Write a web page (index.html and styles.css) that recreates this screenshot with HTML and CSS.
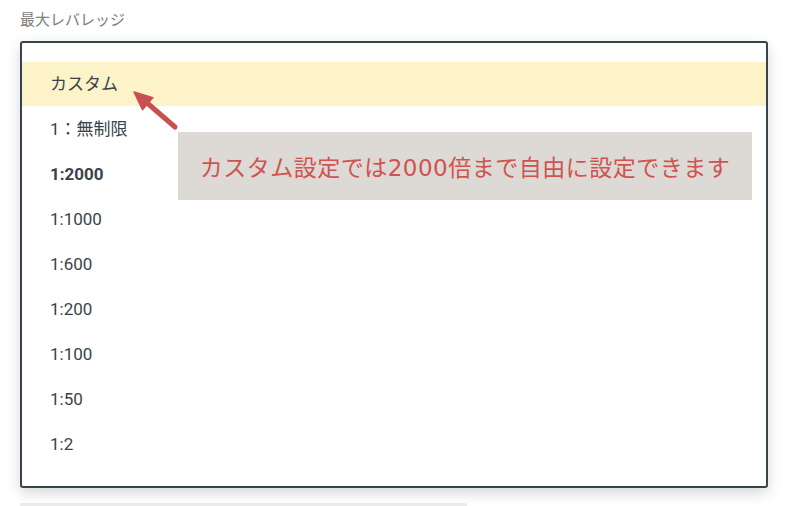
FILE: index.html
```html
<!DOCTYPE html>
<html lang="ja">
<head>
<meta charset="utf-8">
<link rel="stylesheet" href="styles.css">
</head>
<body>
<div class="page">
  <div class="label">最大レバレッジ</div>
  <div class="select">
    <ul class="options">
      <li class="opt selected">カスタム</li>
      <li class="opt">1：無制限</li>
      <li class="opt bold">1:2000</li>
      <li class="opt">1:1000</li>
      <li class="opt">1:600</li>
      <li class="opt">1:200</li>
      <li class="opt">1:100</li>
      <li class="opt">1:50</li>
      <li class="opt">1:2</li>
    </ul>
    <div class="callout">カスタム設定では2000倍まで自由に設定できます</div>
  </div>
  <div class="next-bar"></div>
  <svg class="arrow" width="80" height="60" viewBox="0 0 80 60">
    <line x1="36" y1="22" x2="65" y2="47" stroke="#c8504f" stroke-width="5" stroke-linecap="round"/>
    <polygon points="24,12 32.5,29.8 42.9,17.6" fill="#c8504f" stroke="#c8504f" stroke-width="1.5" stroke-linejoin="round"/>
  </svg>
</div>
</body>
</html>
```

FILE: styles.css
```css
html, body {
  margin: 0;
  padding: 0;
  background: #ffffff;
}
body {
  font-family: Roboto, "Noto Sans CJK JP", sans-serif;
  width: 788px;
  height: 506px;
  overflow: hidden;
}
.page {
  position: relative;
  padding: 10px 20px 0 20px;
}
.label {
  font-size: 15px;
  line-height: 21px;
  color: #808080;
  height: 21px;
  margin-bottom: 10px;
}
.select {
  position: relative;
  width: 744px;
  height: 443px;
  border: 2px solid #36444e;
  border-radius: 3px;
  background: #fff;
  box-shadow: 0 5px 14px rgba(0, 0, 0, 0.16);
  box-sizing: content-box;
}
.options {
  list-style: none;
  margin: 0;
  padding: 19px 0 19px 0;
}
.opt {
  height: 45px;
  line-height: 45px;
  padding-left: 28px;
  font-size: 17px;
  color: #3a434c;
}
.opt.selected {
  background: #fdf3c9;
  height: 44px;
  line-height: 44px;
  margin-bottom: 1px;
}
.opt.bold {
  font-weight: 700;
}
.callout {
  position: absolute;
  left: 156px;
  top: 89px;
  width: 574px;
  height: 68px;
  background: #ddd9d4;
  color: #cf5350;
  font-family: "DejaVu Sans", "Noto Sans CJK JP", sans-serif;
  font-size: 23px;
  font-weight: 400;
  letter-spacing: 0.5px;
  display: flex;
  align-items: center;
  justify-content: center;
}
.next-bar {
  margin-top: 15px;
  width: 447px;
  height: 4px;
  background: #ececec;
}
.arrow {
  position: absolute;
  left: 110px;
  top: 80px;
}
```
